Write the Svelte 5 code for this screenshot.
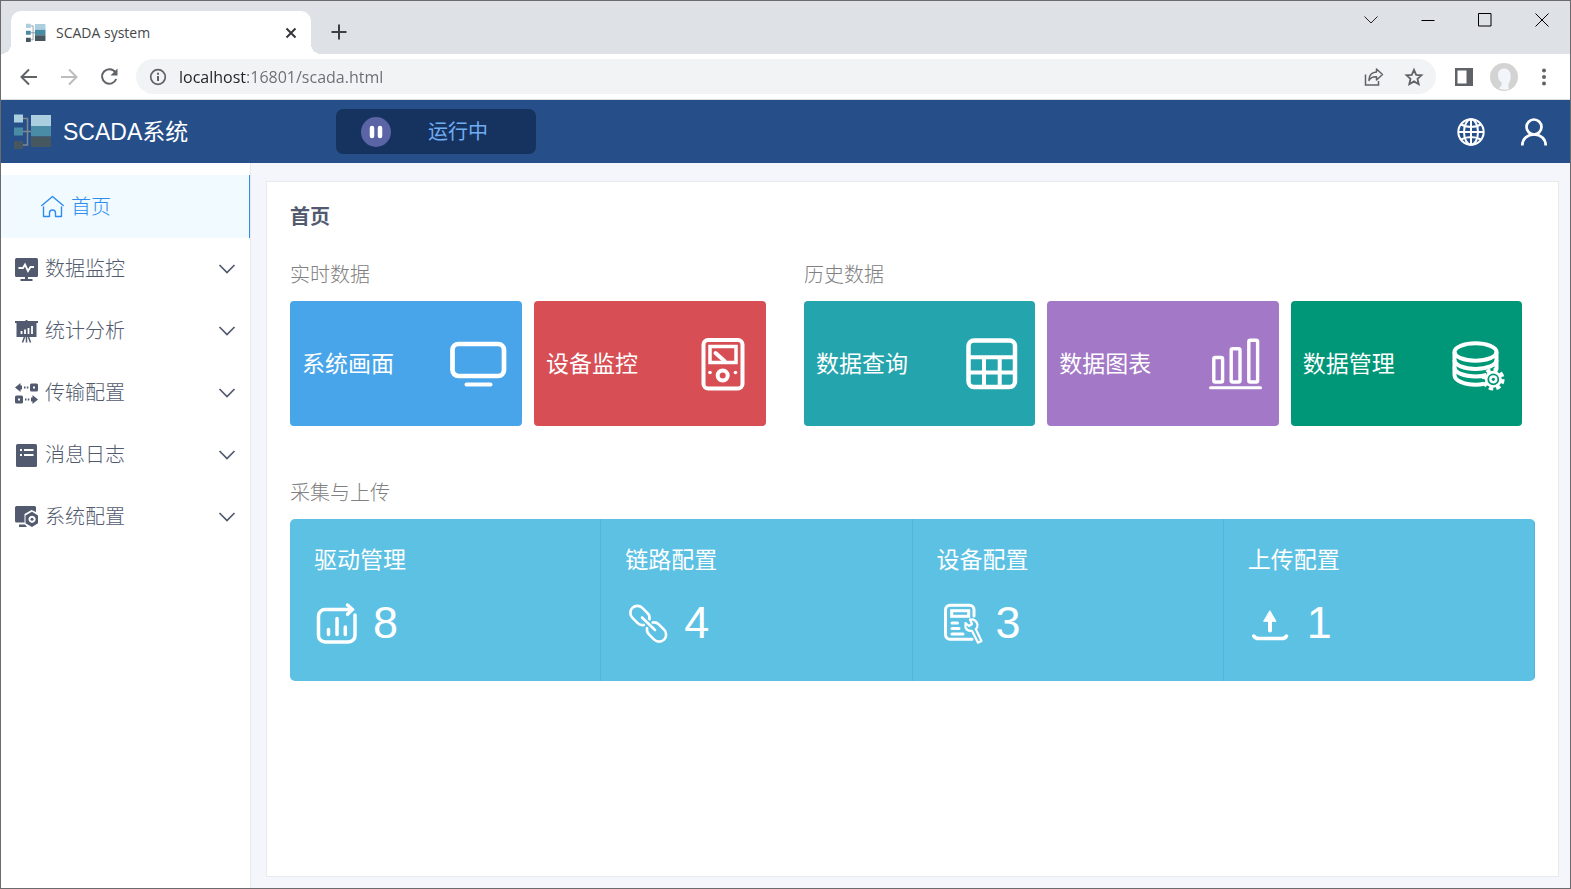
<script lang="ts">
  type MenuItem = { id: string; label: string };
  type Tile = { id: string; label: string; color: string };

  const menu: MenuItem[] = [
    { id: 'monitor', label: '数据监控' },
    { id: 'stats', label: '统计分析' },
    { id: 'transfer', label: '传输配置' },
    { id: 'log', label: '消息日志' },
    { id: 'system', label: '系统配置' }
  ];

  const groups: { title: string; tiles: Tile[] }[] = [
    {
      title: '实时数据',
      tiles: [
        { id: 'screen', label: '系统画面', color: '#48a5ea' },
        { id: 'meter', label: '设备监控', color: '#d74e55' }
      ]
    },
    {
      title: '历史数据',
      tiles: [
        { id: 'table', label: '数据查询', color: '#24a4ac' },
        { id: 'chart', label: '数据图表', color: '#a378c6' },
        { id: 'database', label: '数据管理', color: '#009778' }
      ]
    }
  ];

  const counters = [
    { id: 'driver', label: '驱动管理', value: 8 },
    { id: 'link', label: '链路配置', value: 4 },
    { id: 'device', label: '设备配置', value: 3 },
    { id: 'upload', label: '上传配置', value: 1 }
  ];

  let url = $state('localhost:16801/scada.html');
  let open = $state('');

  function toggle(id: string) {
    open = open === id ? '' : id;
  }
</script>

{#snippet logo(size: number)}
  <svg width={size} height={size} viewBox="0 0 38 36" aria-hidden="true">
    <path d="M9 4.500h4.500v26.500H9M9 17.500h8" fill="none" stroke="#80878f" stroke-width="1.500" />
    <path d="M0 .5h9v8H0zM17 1h20v11H17z" fill="#abcfdf" />
    <path d="M0 13.500h9v8H0zM17 12h20v10.500H17z" fill="#4a8ca6" />
    <path d="M0 27h9v8H0zM17 22.500h20V33H17z" fill="#46575f" />
  </svg>
{/snippet}

<div class="window">
  <div class="titlebar">
    <div class="tab">
      {@render logo(20)}
      <span class="tab-title">SCADA system</span>
      <button class="tab-close" aria-label="Close tab">
        <svg width="12" height="12" viewBox="0 0 12 12"><path d="M1.500 1.500l9 9M10.500 1.500l-9 9" stroke="#35373b" stroke-width="2" /></svg>
      </button>
    </div>
    <button class="new-tab" aria-label="New tab">
      <svg width="16" height="16" viewBox="0 0 16 16"><path d="M8 .5v15M.5 8h15" stroke="#3c4043" stroke-width="2" /></svg>
    </button>
    <div class="win-buttons">
      <button aria-label="Search tabs">
        <svg width="14" height="14" viewBox="0 0 14 14"><path d="M.5 3.500L7 10l6.500-6.500" fill="none" stroke="#222" /></svg>
      </button>
      <button aria-label="Minimize">
        <svg width="14" height="14" viewBox="0 0 14 14"><path d="M.5 7.500h13" stroke="#000" /></svg>
      </button>
      <button aria-label="Maximize">
        <svg width="14" height="14" viewBox="0 0 14 14"><path d="M.5.500h12.500v12.500H.5z" fill="none" stroke="#000" /></svg>
      </button>
      <button aria-label="Close">
        <svg width="14" height="14" viewBox="0 0 14 14"><path d="M.5.500l13 13M13.500.500l-13 13" stroke="#000" /></svg>
      </button>
    </div>
  </div>

  <div class="toolbar">
    <button class="tool" aria-label="Back">
      <svg width="18" height="18" viewBox="0 0 18 18"><path d="M17 9H2M9 1.500L1.500 9 9 16.500" fill="none" stroke="#5f6368" stroke-width="2" /></svg>
    </button>
    <button class="tool" aria-label="Forward">
      <svg width="18" height="18" viewBox="0 0 18 18"><path d="M1 9h15M9 1.500L16.500 9 9 16.500" fill="none" stroke="#babcbe" stroke-width="2" /></svg>
    </button>
    <button class="tool" aria-label="Reload">
      <svg width="18" height="18" viewBox="0 0 18 18">
        <path d="M15.300 4.200A7.300 7.300 0 1 0 16.200 11" fill="none" stroke="#5f6368" stroke-width="2" />
        <path d="M17.500.500v7h-7z" fill="#5f6368" />
      </svg>
    </button>
    <div class="omnibox">
      <svg width="18" height="18" viewBox="0 0 18 18" aria-hidden="true">
        <circle cx="9" cy="9" r="7.300" fill="none" stroke="#5f6368" stroke-width="1.700" />
        <path d="M9 8v5M9 4.700v2" stroke="#5f6368" stroke-width="2" />
      </svg>
      <input type="text" aria-label="Address" bind:value={url} />
      <button class="tool" aria-label="Share">
        <svg width="20" height="20" viewBox="0 0 20 20">
          <path d="M1.500 7.500v10.500h13v-4" fill="none" stroke="#5f6368" stroke-width="1.500" />
          <path d="M5 12.500C5.500 7.500 8.500 5.300 12.500 5.100V2L18.500 7.500l-6 5.500V9.800C9 9.600 6.500 10.700 5 13.500z" fill="none" stroke="#5f6368" stroke-width="1.500" stroke-linejoin="round" />
        </svg>
      </button>
      <button class="tool" aria-label="Bookmark this tab">
        <svg width="18" height="18" viewBox="0 0 18 18"><path d="M9 1.800l2.200 5 5.300.500-4 3.600 1.200 5.300L9 13.400l-4.700 2.800 1.200-5.300-4-3.600 5.300-.500z" fill="none" stroke="#5f6368" stroke-width="1.800" /></svg>
      </button>
    </div>
    <button class="tool" aria-label="Side panel">
      <svg width="18" height="18" viewBox="0 0 18 18"><path d="M0 0h18v18H0zM2.500 2.500v13h9v-13z" fill="#5f6368" fill-rule="evenodd" /></svg>
    </button>
    <button class="tool" aria-label="Profile">
      <svg width="28" height="28" viewBox="0 0 28 28">
        <circle cx="14" cy="14" r="14" fill="#d3d3d3" />
        <path d="M14 5.500c-4 0-6.200 3-6 7 .2 3.500 1.800 6 3.800 7 .2 2.500-1 4.500-3.300 5.800A13 13 0 0 0 19 26c-.800-2.500-.500-5-.200-6 1.800-2 2-5 1.800-8-.300-4-3-6.500-6.600-6.500z" fill="#f2f5fa" />
      </svg>
    </button>
    <button class="tool" aria-label="Menu">
      <svg width="4" height="18" viewBox="0 0 4 18" fill="#5f6368"><circle cx="2" cy="2.500" r="2" /><circle cx="2" cy="9" r="2" /><circle cx="2" cy="15.500" r="2" /></svg>
    </button>
  </div>

  <header>
    <a class="brand" href="#home">
      {@render logo(38)}
      <span>SCADA系统</span>
    </a>
    <div class="status">
      <button class="pause" aria-label="暂停">
        <svg width="14" height="14" viewBox="0 0 14 14"><path d="M3 3v8M11 3v8" stroke="#fff" stroke-width="4.500" stroke-linecap="round" /></svg>
      </button>
      <span>运行中</span>
    </div>
    <div class="account">
      <button aria-label="语言">
        <svg width="28" height="28" viewBox="0 0 28 28" fill="none" stroke="#fff" stroke-width="2">
          <circle cx="14" cy="14" r="12.700" />
          <ellipse cx="14" cy="14" rx="7" ry="12.700" />
          <path d="M14 1.300v25.400M1.300 14h25.400M4 6.500q10 5 20 0M4 21.500q10-5 20 0" />
        </svg>
      </button>
      <button aria-label="用户">
        <svg width="28" height="28" viewBox="0 0 28 28" fill="none" stroke="#fff" stroke-width="2.700">
          <circle cx="14" cy="9" r="7.500" />
          <path d="M2.300 27.500c0-6.500 5-11 11.700-11s11.700 4.500 11.700 11" />
        </svg>
      </button>
    </div>
  </header>

  <div class="body">
    <nav>
      <a class="item active" href="#home">
        <svg width="23" height="23" viewBox="0 0 23 23" fill="none" stroke="currentColor" stroke-width="1.400" stroke-linejoin="round" stroke-linecap="round">
          <path d="M.8 10.500L11.500 1.500l10.700 9" />
          <path d="M2.500 12v9.500h6V18a3 3 0 0 1 6 0v3.500h6V12" />
        </svg>
        <span>首页</span>
      </a>
      {#each menu as item}
        <button class="item" aria-expanded={open === item.id} onclick={() => toggle(item.id)}>
          <svg width="23" height="23" viewBox="0 0 23 23" fill="#515a6e">
            {#if item.id === 'monitor'}
              <rect width="23" height="19" rx="1.500" />
              <path d="M10 19h3v2h4.500v2h-12v-2H10z" />
              <path d="M3.500 10H8l2-3.500 3 6.500 2.500-4H19" fill="none" stroke="#fff" stroke-width="1.800" />
            {:else if item.id === 'stats'}
              <path d="M0 1h10.500V0h2v1H23v2h-1.500v14h-20V3H0z" />
              <path d="M6.500 14v-3M10 14V9.500M13.500 14V8M17 14V6" stroke="#fff" stroke-width="1.800" />
              <path d="M9.500 17l-2 5.500M11.500 17v5.500M13.500 17l2 5.500" stroke="#515a6e" stroke-width="1.500" />
            {:else if item.id === 'transfer'}
              <path d="M0 5.500L5.500 1v2.500H7v4H5.500V10zM23 17.500L17.500 13v2.500H16v4h1.500V22z" />
              <path d="M9 4.500h1.500v2H9zM11.800 4.500h1.500v2h-1.500zM10 16.500h1.500v2H10zM12.800 16.500h1.500v2h-1.500z" />
              <path d="M16.500 3h5v5h-5zM1.500 15h5v5h-5z" fill="none" stroke="#515a6e" stroke-width="3" stroke-linejoin="round" />
            {:else if item.id === 'log'}
              <rect x="1" width="21" height="23" rx="1.500" />
              <path d="M5 6h2M9 6h9.500M5 11h2M9 11h9.500" stroke="#fff" stroke-width="1.800" />
            {:else}
              <path d="M1.500 0h18A1.500 1.500 0 0 1 21 1.500V6L16.500 4 9.500 8v8.500h-8A1.500 1.500 0 0 1 0 15V1.500A1.500 1.500 0 0 1 1.500 0zM4 18.500h6l2 2.500H4z" />
              <path d="M17 5.700l6 3.700v7.800L17 21l-6.500-3.800V9.400zM17 9.700a3.600 3.600 0 1 0 .1 0z" fill-rule="evenodd" />
              <circle cx="17" cy="13.300" r="1.500" />
            {/if}
          </svg>
          <span>{item.label}</span>
          <svg class="chevron" width="18" height="18" viewBox="0 0 18 18"><path d="M1.500 5L9 12.500 16.500 5" fill="none" stroke="#515a6e" stroke-width="1.700" /></svg>
        </button>
      {/each}
    </nav>

    <main>
      <section class="page">
        <h1>首页</h1>

        <div class="groups">
          {#each groups as group}
            <div>
              <h2>{group.title}</h2>
              <div class="tiles">
                {#each group.tiles as tile}
                  <a class="tile" href="#{tile.id}" style:background={tile.color}>
                    <span>{tile.label}</span>
                    <svg width="56" height="56" viewBox="0 0 56 56" fill="none" stroke="#fff" stroke-width="4">
                      {#if tile.id === 'screen'}
                        <rect x="2.500" y="8" width="51.500" height="32" rx="6" stroke-width="4.700" />
                        <path d="M16.500 48.500h24" stroke-linecap="round" />
                      {:else if tile.id === 'meter'}
                        <rect x="9.500" y="4" width="39" height="48.500" rx="4.500" />
                        <rect x="16" y="10.500" width="26" height="16" stroke-width="3.500" />
                        <path d="M21.500 17l9 8" stroke-linecap="round" />
                        <circle cx="28.700" cy="39.500" r="5" />
                        <circle cx="16" cy="36.500" r="1.800" fill="#fff" stroke="none" />
                        <circle cx="41.500" cy="36.500" r="1.800" fill="#fff" stroke="none" />
                      {:else if tile.id === 'table'}
                        <rect x="5.500" y="4.500" width="46.500" height="46.500" rx="5.500" stroke-width="4.500" />
                        <path d="M5.500 21.300H52M5.500 36.500H52M21 21.300V51M36.700 21.300V51" />
                      {:else if tile.id === 'chart'}
                        <g stroke-width="3.400">
                          <rect x="6.800" y="21.500" width="8.800" height="24.500" rx="1.500" />
                          <rect x="24.200" y="12.700" width="8.800" height="33.300" rx="1.500" />
                          <rect x="41.800" y="4.200" width="8.800" height="41.800" rx="1.500" />
                          <path d="M3.500 51.800h50" stroke-width="3" stroke-linecap="round" />
                        </g>
                      {:else}
                        <ellipse cx="25.500" cy="16" rx="21" ry="8.700" />
                        <path d="M4.500 16v23c0 5.500 9.500 9.700 21 9.700 3 0 6-.3 8.500-.9M46.500 16v17" />
                        <path d="M4.500 24c0 5 9.500 9 21 9s21-4 21-9M4.500 31.500c0 5 9.500 9 21 9 4 0 8-.5 11-1.500" />
                        <circle cx="43.300" cy="43.300" r="8.500" fill="#fff" stroke="none" />
                        <circle cx="43.300" cy="43.300" r="9.300" stroke-width="4" stroke-dasharray="4.300 3" />
                        <circle cx="43.300" cy="43.300" r="5" stroke="#009778" stroke-width="1.800" />
                        <circle cx="43.300" cy="43.300" r="1.600" fill="#009778" stroke="none" />
                      {/if}
                    </svg>
                  </a>
                {/each}
              </div>
            </div>
          {/each}
        </div>

        <h2>采集与上传</h2>
        <div class="counters">
          {#each counters as c}
            <a class="counter" href="#{c.id}">
              <span class="label">{c.label}</span>
              <span class="value">
                <svg width="45" height="45" viewBox="0 0 45 45" fill="none" stroke="#fff" stroke-width="3" stroke-linecap="round">
                  {#if c.id === 'driver'}
                    <g stroke-width="3.500">
                      <path d="M38 8.500H11A6.500 6.500 0 0 0 4.500 15v19.500a6.500 6.500 0 0 0 6.500 6.500h23.500a6.500 6.500 0 0 0 6.500-6.500V14" />
                      <path d="M33.500 4l4.800 4.500-4.800 4.800" />
                      <path d="M14.500 28.500v5M23 17.500v16M31.300 26v7.500" />
                    </g>
                  {:else if c.id === 'link'}
                    <g stroke-width="2.600">
                      <path d="M9.400-4A7 7 0 0 0 3.700-7h-7.400a7 7 0 0 0 0 14h7.400A7 7 0 0 0 9.400 4" transform="translate(15 14.500) rotate(45)" />
                      <path d="M9.400-4A7 7 0 0 0 3.700-7h-7.400a7 7 0 0 0 0 14h7.400A7 7 0 0 0 9.400 4" transform="translate(31.500 31) rotate(225)" />
                      <path d="M17 16.500l13 12.500" />
                    </g>
                  {:else if c.id === 'device'}
                    <path d="M37 15V8.700A4.500 4.500 0 0 0 32.500 4.200H13A4.500 4.500 0 0 0 8.500 8.700v25a4.500 4.500 0 0 0 4.500 4.500H35" />
                    <rect x="14.700" y="9.700" width="17" height="5.600" stroke-linecap="butt" />
                    <path d="M15 22h5.500M15 27.500h7M15 33h11" />
                    <path d="M28.500 22l3.500 3 3-2-2-4.500q6-.5 7.500 5 .2 3-1.700 4.500l5.700 12-3.500 1.700-6-11.900q-5 .7-6.500-3.300z" stroke-width="2.200" stroke-linejoin="round" />
                  {:else}
                    <path d="M22 10l6 10.300H16z" fill="#fff" stroke-width="1" stroke-linejoin="round" />
                    <path d="M22 20v9.500" stroke-width="4" />
                    <path d="M5.800 35q1.500 2.500 5 2.500h22.700q4 0 5-2.500" stroke-width="3.500" />
                  {/if}
                </svg>
                {c.value}
              </span>
            </a>
          {/each}
        </div>
      </section>
    </main>
  </div>
</div>

<style>
  :global(body) {
    margin: 0;
  }

  .window {
    display: flex;
    flex-direction: column;
    box-sizing: border-box;
    min-height: 100vh;
    border: 1px solid #6b6b6d;
    background: #fff;
    font-family: 'Liberation Sans', 'Noto Sans CJK SC', sans-serif;
    line-height: 30px;
  }

  button {
    display: flex;
    align-items: center;
    justify-content: center;
    padding: 0;
    border: 0;
    background: none;
    font: inherit;
    cursor: pointer;
  }

  a {
    color: inherit;
    text-decoration: none;
  }

  svg {
    flex: none;
    overflow: visible;
  }

  /* browser chrome */
  .titlebar {
    display: flex;
    height: 53px;
    padding-left: 10px;
    background: #dee1e6;
  }

  .tab {
    position: relative;
    display: flex;
    align-items: center;
    gap: 10px;
    box-sizing: border-box;
    width: 300px;
    height: 43px;
    margin-top: 10px;
    padding: 0 10px 0 15px;
    border-radius: 10px 10px 0 0;
    background: #fff;
  }

  .tab::before,
  .tab::after {
    content: '';
    position: absolute;
    bottom: 0;
    width: 10px;
    height: 10px;
  }

  .tab::before {
    right: 100%;
    background: radial-gradient(circle at 0 0, transparent 10px, #fff 10px);
  }

  .tab::after {
    left: 100%;
    background: radial-gradient(circle at 100% 0, transparent 10px, #fff 10px);
  }

  .tab-title {
    flex: 1;
    font: 14px/20px 'Open Sans', sans-serif;
    color: #45474a;
  }

  .tab-close {
    width: 20px;
    height: 20px;
  }

  .new-tab {
    width: 28px;
    height: 28px;
    margin: 17px 0 0 14px;
  }

  .win-buttons {
    display: flex;
    margin-left: auto;
  }

  .win-buttons button {
    width: 57px;
    height: 37px;
  }

  .toolbar {
    display: flex;
    align-items: center;
    gap: 12px;
    height: 45px;
    padding: 0 12px 0 14px;
    border-bottom: 1px solid #dcdde0;
  }

  .tool {
    width: 28px;
    height: 28px;
  }

  .omnibox {
    flex: 1;
    display: flex;
    align-items: center;
    gap: 12px;
    box-sizing: border-box;
    height: 35px;
    margin: 0 2px 0 1px;
    padding: 0 8px 0 13px;
    border-radius: 18px;
    background: #f1f3f4;
  }

  .omnibox input {
    flex: 1;
    min-width: 0;
    padding: 0;
    border: 0;
    outline: 0;
    /* host is dark, the rest of the address is dimmed */
    background: linear-gradient(to right, #202124 67px, #696d72 67px);
    background-clip: text;
    color: transparent;
    font: 16px 'Open Sans', sans-serif;
  }

  /* application */
  header {
    display: flex;
    align-items: center;
    height: 63px;
    background: #264f89;
    color: #fff;
  }

  .brand {
    display: flex;
    align-items: center;
    gap: 11px;
    box-sizing: border-box;
    width: 335px;
    padding-left: 13px;
    font-size: 23px;
  }

  .status {
    display: flex;
    align-items: center;
    gap: 37px;
    box-sizing: border-box;
    width: 200px;
    height: 45px;
    padding-left: 25px;
    border-radius: 7px;
    background: #16325f;
    font-size: 20px;
    color: #71adf3;
  }

  .pause {
    width: 30px;
    height: 30px;
    border-radius: 50%;
    background: #5b65a6;
  }

  .account {
    display: flex;
    gap: 35px;
    margin-left: auto;
    padding-right: 22px;
  }

  .body {
    flex: 1;
    display: flex;
  }

  nav {
    box-sizing: border-box;
    width: 250px;
    padding-top: 12px;
    border-right: 1px solid #e8eaec;
  }

  .item {
    display: flex;
    align-items: center;
    justify-content: flex-start;
    gap: 7px;
    box-sizing: border-box;
    width: 100%;
    height: 62px;
    padding: 0 14px;
    font-size: 20px;
    font-weight: 300;
    color: #515a6e;
  }

  .item.active {
    height: 63px;
    padding-left: 40px;
    border-right: 1px solid #2d8cf0;
    background: #f0faff;
    color: #2d8cf0;
  }

  .chevron {
    margin-left: auto;
  }

  main {
    flex: 1;
    display: flex;
    padding: 18px 11px 11px 15px;
    background: #f5f6fb;
  }

  .page {
    flex: 1;
    padding: 20px 23px;
    border: 1px solid #e8eaec;
    background: #fff;
  }

  h1 {
    margin: 0 0 28px;
    font-size: 20px;
    line-height: 30px;
    color: #515a6e;
  }

  h2 {
    margin: 0 0 11px;
    font-size: 20px;
    font-weight: 300;
    line-height: 30px;
    color: #808080;
  }

  .groups {
    display: grid;
    grid-template-columns: 476fr 718fr;
    gap: 38px;
    margin-bottom: 52px;
    padding-right: 13px;
  }

  .tiles {
    display: grid;
    grid-auto-flow: column;
    grid-auto-columns: 1fr;
    gap: 12px;
  }

  .tile {
    display: flex;
    align-items: center;
    justify-content: space-between;
    height: 125px;
    padding: 0 16px 0 12px;
    border-radius: 4px;
    font-size: 23px;
    color: #fff;
  }

  .counters {
    display: grid;
    grid-template-columns: repeat(4, 1fr);
    border-radius: 5px;
    overflow: hidden;
    background: #5dc1e4;
    color: #fff;
  }

  .counter {
    height: 138px;
    padding: 24px 0 0 24px;
    border-right: 1px solid #52b5da;
  }

  .label {
    display: block;
    margin-bottom: 22px;
    font-size: 23px;
    line-height: 34px;
  }

  .value {
    display: flex;
    align-items: center;
    gap: 14px;
    font-size: 45px;
    line-height: 48px;
  }
</style>
